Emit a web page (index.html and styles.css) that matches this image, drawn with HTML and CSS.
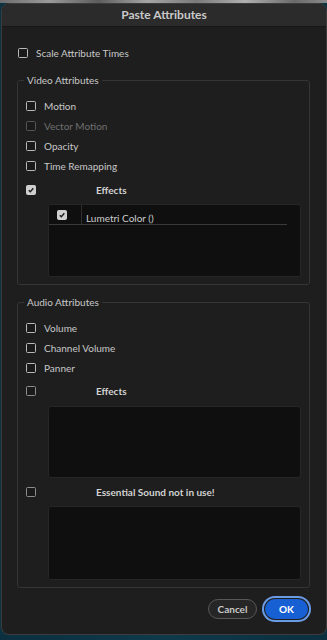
FILE: index.html
```html
<!DOCTYPE html>
<html>
<head>
<meta charset="utf-8">
<link rel="stylesheet" href="styles.css">
</head>
<body>
<div class="backdrop-top"></div>
<div class="dialog">
  <div class="titlebar">Paste Attributes</div>
  <div class="content">
    <div class="row scale"><span class="cb"></span><span class="lbl">Scale Attribute Times</span></div>

    <fieldset class="group video">
      <legend>Video Attributes</legend>
      <div class="row"><span class="cb"></span><span class="lbl">Motion</span></div>
      <div class="row disabled"><span class="cb"></span><span class="lbl">Vector Motion</span></div>
      <div class="row"><span class="cb"></span><span class="lbl">Opacity</span></div>
      <div class="row"><span class="cb"></span><span class="lbl">Time Remapping</span></div>
      <div class="row head v-effects"><span class="cb checked"><svg viewBox="0 0 10 10"><path d="M2.2 5.2 L4.2 7.1 L7.9 2.9" /></svg></span><span class="lbl bold">Effects</span></div>
      <div class="listbox v-list">
        <div class="list-row">
          <div class="list-cb"><span class="cb checked"><svg viewBox="0 0 10 10"><path d="M2.2 5.2 L4.2 7.1 L7.9 2.9" /></svg></span></div>
          <div class="list-name">Lumetri Color ()</div>
        </div>
      </div>
    </fieldset>

    <fieldset class="group audio">
      <legend>Audio Attributes</legend>
      <div class="row"><span class="cb"></span><span class="lbl">Volume</span></div>
      <div class="row"><span class="cb"></span><span class="lbl">Channel Volume</span></div>
      <div class="row"><span class="cb"></span><span class="lbl">Panner</span></div>
      <div class="row head a-effects"><span class="cb dim"></span><span class="lbl bold">Effects</span></div>
      <div class="listbox a-list1"></div>
      <div class="row head a-sound"><span class="cb dim"></span><span class="lbl bold">Essential Sound not in use!</span></div>
      <div class="listbox a-list2"></div>
    </fieldset>

    <div class="buttons">
      <button class="btn cancel">Cancel</button>
      <button class="btn ok">OK</button>
    </div>
  </div>
</div>
<div class="backdrop-bottom"></div>
</body>
</html>
```
FILE: styles.css
```css
html, body {
  margin: 0;
  padding: 0;
}
body {
  width: 327px;
  height: 640px;
  overflow: hidden;
  background: #0c3242;
  font-family: Lato, "Open Sans", sans-serif;
  color: #c8c8c8;
}
.backdrop-top {
  height: 3px;
  background: linear-gradient(90deg, #6d6d6d 0%, #9a9a9a 15%, #5d5d5d 30%, #a5a5a5 45%, #7a7a7a 60%, #b0b0b0 75%, #6a6a6a 90%, #8a8a8a 100%);
}
.dialog {
  width: 324px;
  height: 630px;
  margin-left: 1px;
  background: #1e1e1e;
  border: 1px solid #3c3c3c;
  border-radius: 8px;
  overflow: hidden;
  display: flex;
  flex-direction: column;
}
.titlebar {
  height: 22px;
  line-height: 22px;
  flex: none;
  background: #2b2b2b;
  border-bottom: 1px solid #171717;
  text-align: center;
  font-weight: 700;
  font-size: 12px;
  color: #c9c9c9;
}
.content {
  padding: 16px 15px 0 15px;
  display: flex;
  flex-direction: column;
}
.row {
  height: 20px;
  display: flex;
  align-items: center;
  font-size: 10px;
}
.row.scale {
  margin-left: 1px;
}
.cb {
  width: 10px;
  height: 10px;
  box-sizing: border-box;
  border: 1.6px solid #b8b8b8;
  border-radius: 1.5px;
  background: #1a1a1a;
  flex: none;
  display: flex;
}
.cb.checked {
  background: #cfcfcf;
  border-color: #cfcfcf;
}
.cb svg {
  width: 100%;
  height: 100%;
}
.cb svg path {
  fill: none;
  stroke: #1e1e1e;
  stroke-width: 1.8;
}
.cb.dim {
  border-color: #8c8c8c;
}
.lbl {
  margin-left: 8px;
}
.disabled .cb {
  border-color: #565656;
}
.disabled .lbl {
  color: #6f6f6f;
}
.bold {
  font-weight: 700;
  color: #d2d2d2;
}
.row.head .lbl {
  margin-left: 60px;
}
.group {
  margin: 11px 0 0 0;
  width: 293px;
  box-sizing: border-box;
  padding: 10px 0 7px 8px;
  border: 1px solid #353535;
  border-radius: 3px;
}
.group legend {
  font-size: 10px;
  line-height: 12px;
  padding: 0 3px;
  margin-left: -2px;
  color: #c8c8c8;
}
.v-effects {
  margin-top: 4px;
}
.listbox {
  margin-left: 22px;
  width: 253px;
  box-sizing: border-box;
  background: #0f0f0f;
  border: 1px solid #262626;
  border-radius: 3px;
}
.v-list {
  margin-top: 4px;
  height: 73px;
}
.list-row {
  display: flex;
  height: 19px;
  width: 238px;
  border-bottom: 1px solid #3a3a3a;
}
.list-cb {
  width: 33px;
  flex: none;
  display: flex;
  align-items: center;
  padding-left: 8px;
  box-sizing: border-box;
  border-right: 1px solid #2e2e2e;
}
.list-name {
  font-size: 10px;
  padding-left: 4px;
  display: flex;
  align-items: center;
  padding-top: 7px;
  color: #cdcdcd;
}
.audio {
  margin-top: 11px;
}
.a-effects {
  margin-top: 3px;
}
.a-list1 {
  margin-top: 5px;
  height: 72px;
}
.a-sound {
  margin-top: 4px;
}
.a-list2 {
  margin-top: 4px;
  height: 74px;
}
.buttons {
  display: flex;
  justify-content: flex-end;
  align-items: center;
  margin-top: 8px;
  height: 26px;
}
.btn {
  font-family: Lato, "Open Sans", sans-serif;
  font-weight: 700;
  font-size: 10px;
  height: 20px;
  border-radius: 10px;
  padding: 0;
  display: flex;
  align-items: center;
  justify-content: center;
}
.cancel {
  width: 49px;
  background: #262626;
  border: 1.5px solid #585858;
  color: #c8c8c8;
}
.ok {
  width: 43px;
  margin-left: 8px;
  margin-right: 3px;
  background: #1760d4;
  border: none;
  color: #ffffff;
  box-shadow: 0 0 0 1px #1e1e1e, 0 0 0 3px #6a9be6;
}
.backdrop-bottom {
  height: 5px;
  background: linear-gradient(90deg, #0b2f3e, #0e3a4c 50%, #0b2f3e);
}
```
